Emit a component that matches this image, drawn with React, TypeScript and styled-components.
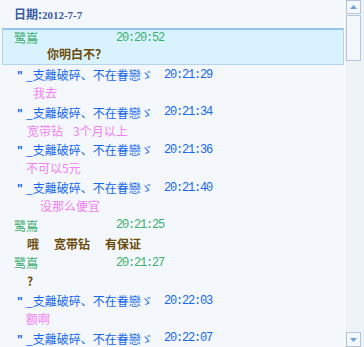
import React from 'react';
import styled, { createGlobalStyle } from 'styled-components';

const GlobalStyle = createGlobalStyle`
  html, body {
    margin: 0;
    padding: 0;
    width: 364px;
    height: 347px;
    overflow: hidden;
    background: #f4f8fc;
  }
  body {
    font-family: "Noto Sans CJK SC", "Noto Sans", sans-serif;
    font-size: 12px;
  }
`;

type Tone = 'green' | 'blue';
type BodyTone = 'bold' | 'pink';

const toneColor: Record<Tone, string> = {
  green: '#3aae6e',
  blue: '#1466ee',
};

const Frame = styled.div`
  display: flex;
  width: 364px;
  height: 347px;
`;

const ChatPane = styled.div`
  width: 344px;
  display: flex;
  flex-direction: column;
  overflow: hidden;
`;

const DateHeader = styled.div`
  flex: none;
  height: 28px;
  line-height: 28px;
  padding-left: 14px;
  color: #3b5ba6;
  font-weight: bold;
  white-space: nowrap;
`;

const DateValue = styled.span`
  font-family: "Liberation Serif", serif;
  font-size: 11px;
`;

const Entry = styled.div<{ $active?: boolean }>`
  flex: none;
  padding-left: ${(p) => (p.$active ? 0 : 3)}px;
  ${(p) =>
    p.$active &&
    `
    margin-left: 2px;
    background: #d9f3fe;
    border: 1px solid #b4d4ea;
    border-top: 2px solid #94c4ea;
    padding-bottom: 2px;
  `}
`;

const Meta = styled.div<{ $active?: boolean }>`
  display: flex;
  align-items: center;
  height: ${(p) => (p.$active ? 15 : 19)}px;
  padding-left: 11px;
  white-space: nowrap;
`;

const Sender = styled.span<{ $tone: Tone; $w: number }>`
  display: inline-block;
  width: ${(p) => p.$w}px;
  margin-left: ${(p) => (p.$tone === 'blue' ? 3 : 0)}px;
  color: ${(p) => toneColor[p.$tone]};
  overflow: hidden;
`;

const Quote = styled.span`
  display: inline-block;
  width: 9px;
  font-weight: bold;
  font-family: "Liberation Sans", sans-serif;
`;

const Time = styled.span<{ $tone: Tone }>`
  font-family: "Liberation Mono", monospace;
  font-size: 12px;
  letter-spacing: -1.2px;
  color: ${(p) => toneColor[p.$tone]};
`;

const Body = styled.div<{ $indent: number; $tone: BodyTone; $active?: boolean }>`
  height: ${(p) => (p.$active ? 17 : 18.7)}px;
  line-height: ${(p) => (p.$active ? 17 : 18.7)}px;
  padding-left: ${(p) => p.$indent}px;
  white-space: nowrap;
  color: ${(p) => (p.$tone === 'bold' ? '#6e4d0b' : '#f47ef4')};
  font-weight: ${(p) => (p.$tone === 'bold' ? 'bold' : 'normal')};
`;

const Gap = styled.span<{ $w: number }>`
  display: inline-block;
  width: ${(p) => p.$w}px;
`;

const ScrollBar = styled.div`
  width: 20px;
  display: flex;
  flex-direction: column;
  border-left: 1px solid #ffffff;
  padding-left: 1px;
  box-sizing: border-box;
  background: #eef3f8;
`;

const ArrowBtn = styled.div<{ $h: number }>`
  width: 15px;
  height: ${(p) => p.$h}px;
  box-sizing: border-box;
  border: 1px solid #b6c6da;
  background: #f4f7fc;
  display: flex;
  align-items: center;
  justify-content: center;
`;

const Thumb = styled.div`
  width: 15px;
  height: 46px;
  margin-top: 1px;
  box-sizing: border-box;
  border: 1px solid #b6c6da;
  background: #f3f6fb;
`;

const Track = styled.div`
  flex: 1;
`;

const Arrow = ({ down }: { down?: boolean }) => (
  <svg width="7" height="4" viewBox="0 0 7 4">
    <polygon points={down ? '0,0 7,0 3.5,4' : '3.5,0 7,4 0,4'} fill="#6fa2d8" />
  </svg>
);

const Bird = ({ time, active }: { time: string; active?: boolean }) => (
  <Meta $active={active}>
    <Sender $tone="green" $w={102}>鹭嶌</Sender>
    <Time $tone="green">{time}</Time>
  </Meta>
);

const Broken = ({ time }: { time: string }) => (
  <Meta>
    <Sender $tone="blue" $w={147}>
      <Quote>"</Quote>_支離破碎、不在眷戀ゞ
    </Sender>
    <Time $tone="blue">{time}</Time>
  </Meta>
);

export default function App() {
  return (
    <Frame>
      <GlobalStyle />
      <ChatPane>
        <DateHeader>
          日期:<DateValue>2012-7-7</DateValue>
        </DateHeader>
        <Entry $active>
          <Bird time="20:20:52" active />
          <Body $indent={44} $tone="bold" $active>你明白不？</Body>
        </Entry>
        <Entry>
          <Broken time="20:21:29" />
          <Body $indent={30} $tone="pink">我去</Body>
        </Entry>
        <Entry>
          <Broken time="20:21:34" />
          <Body $indent={24} $tone="pink">
            宽带钻<Gap $w={10} />3个月以上
          </Body>
        </Entry>
        <Entry>
          <Broken time="20:21:36" />
          <Body $indent={23} $tone="pink">不可以5元</Body>
        </Entry>
        <Entry>
          <Broken time="20:21:40" />
          <Body $indent={37} $tone="pink">没那么便宜</Body>
        </Entry>
        <Entry>
          <Bird time="20:21:25" />
          <Body $indent={24} $tone="bold">
            哦<Gap $w={15} />宽带钻<Gap $w={15} />有保证
          </Body>
        </Entry>
        <Entry>
          <Bird time="20:21:27" />
          <Body $indent={24} $tone="bold">?</Body>
        </Entry>
        <Entry>
          <Broken time="20:22:03" />
          <Body $indent={23} $tone="pink">额啊</Body>
        </Entry>
        <Entry>
          <Broken time="20:22:07" />
        </Entry>
      </ChatPane>
      <ScrollBar>
        <ArrowBtn $h={14}>
          <Arrow />
        </ArrowBtn>
        <Thumb />
        <Track />
        <ArrowBtn $h={15}>
          <Arrow down />
        </ArrowBtn>
      </ScrollBar>
    </Frame>
  );
}
